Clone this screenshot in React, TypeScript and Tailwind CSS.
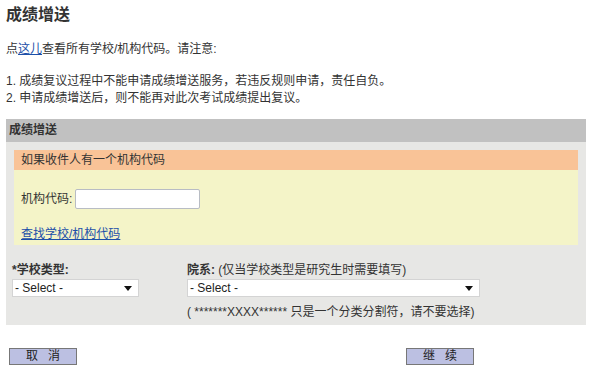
import React from "react";

function FakeSelect({ width }: { width: string }) {
  return (
    <div className={`${width} h-[18px] bg-white border border-[#d4d4d4] flex items-center justify-between pl-[2px] pr-[6px] text-[12px] text-[#222]`}>
      <span>- Select -</span>
      <svg width="8" height="5" viewBox="0 0 8 5">
        <path d="M0 0 L8 0 L4 5 Z" fill="#111" />
      </svg>
    </div>
  );
}

export default function App() {
  return (
    <div className="w-[590px] h-[375px] bg-white text-[#333] text-[12px] leading-[17px] font-['Liberation_Sans','Noto_Sans_CJK_SC',sans-serif]">
      <div className="px-[6px] pt-[5px]">
        <h1 className="text-[16px] leading-[20px] font-bold">成绩增送</h1>
        <p className="mt-[16px]">
          点<a className="text-[#1c4fa8] underline">这儿</a>查看所有学校/机构代码。请注意:
        </p>
        <div className="mt-[15px]">
          <div>1. 成绩复议过程中不能申请成绩增送服务，若违反规则申请，责任自负。</div>
          <div>2. 申请成绩增送后，则不能再对此次考试成绩提出复议。</div>
        </div>
      </div>

      <div className="mx-[6px] mt-[12px] w-[580px]">
        <div className="h-[23px] bg-[#c1c1c1] font-bold flex items-center pl-[3px]">成绩增送</div>
        <div className="bg-[#e7e7e5] px-[8px] pt-[8px] pb-[8px] h-[183px]">
          <div className="h-[20px] bg-[#f9c397] flex items-center pl-[7px]">如果收件人有一个机构代码</div>
          <div className="bg-[#f4f4c8] h-[75px] pl-[7px] pt-[19px]">
            <div className="flex items-center">
              <span>机构代码:</span>
              <div className="ml-[3px] w-[125px] h-[20px] bg-white border border-[#b8bcc4] rounded-[2px]" />
            </div>
            <a className="block mt-[17px] text-[#1c4fa8] underline">查找学校/机构代码</a>
          </div>
          <div className="flex mt-[17px]">
            <div className="w-[175px] -ml-[2px]">
              <div className="font-bold h-[17px]">*学校类型:</div>
              <FakeSelect width="w-[127px]" />
            </div>
            <div>
              <div className="h-[17px]">
                <span className="font-bold">院系:</span> (仅当学校类型是研究生时需要填写)
              </div>
              <FakeSelect width="w-[293px]" />
              <div className="mt-[7px]">( *******XXXX****** 只是一个分类分割符，请不要选择)</div>
            </div>
          </div>
        </div>
      </div>

      <div className="flex mt-[23px] pl-[9px]">
        <button className="w-[68px] h-[17px] bg-[#bcc0e2] border border-[#777] text-[12px] leading-[15px] text-[#222] tracking-[10px] pl-[10px]">取消</button>
        <button className="ml-[329px] w-[68px] h-[17px] bg-[#bcc0e2] border border-[#777] text-[12px] leading-[15px] text-[#222] tracking-[10px] pl-[10px]">继续</button>
      </div>
    </div>
  );
}
